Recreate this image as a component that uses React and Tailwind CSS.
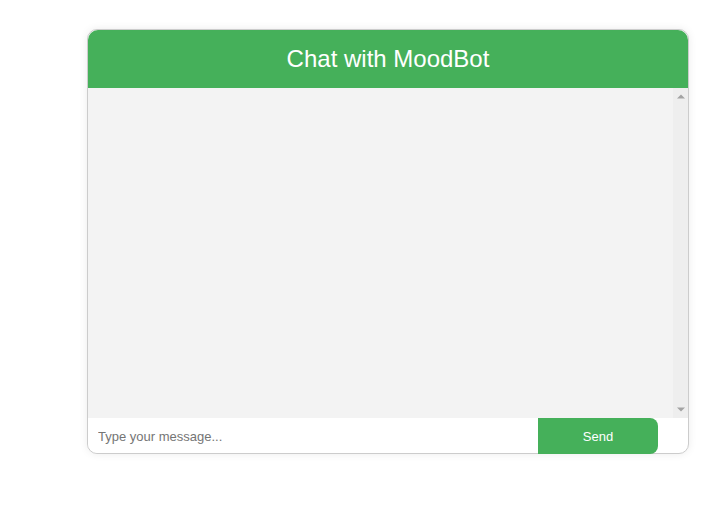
export default function App() {
  return (
    <div className="min-h-[511px] w-full bg-white pt-[29px] pl-[87px]" style={{ fontFamily: '"Liberation Sans", Arial, sans-serif' }}>
      <div className="w-[602px] rounded-[10px] border border-[#cccccc] bg-white shadow-[0_0_8px_rgba(0,0,0,0.08)]">
        <div className="rounded-t-[10px] bg-[#45b05a] py-[15px] text-center text-[24px] leading-[28px] text-white">
          Chat with MoodBot
        </div>
        <div className="flex h-[330px] bg-[#f3f3f3]">
          <div className="flex-1"></div>
          <div className="flex w-[15px] flex-col items-center justify-between bg-[#eeeeee] py-[6px]">
            <svg width="8" height="5" viewBox="0 0 8 5"><path d="M0 4.5 L4 0.5 L8 4.5 Z" fill="#a3a3a3" /></svg>
            <svg width="8" height="5" viewBox="0 0 8 5"><path d="M0 0.5 L8 0.5 L4 4.5 Z" fill="#a3a3a3" /></svg>
          </div>
        </div>
        <div className="flex h-[35px] items-stretch">
          <input
            type="text"
            placeholder="Type your message..."
            className="w-[450px] rounded-bl-[10px] border-none bg-white px-[10px] pt-[2px] text-[13px] text-black outline-none placeholder:text-[#757575]"
            style={{ fontFamily: '"Liberation Sans", Arial, sans-serif' }}
          />
          <button
            className="-mb-px h-[36px] w-[120px] rounded-r-[8px] bg-[#45b05a] pt-[1px] text-[13px] text-white"
            style={{ fontFamily: '"Liberation Sans", Arial, sans-serif' }}
          >
            Send
          </button>
        </div>
      </div>
    </div>
  );
}
